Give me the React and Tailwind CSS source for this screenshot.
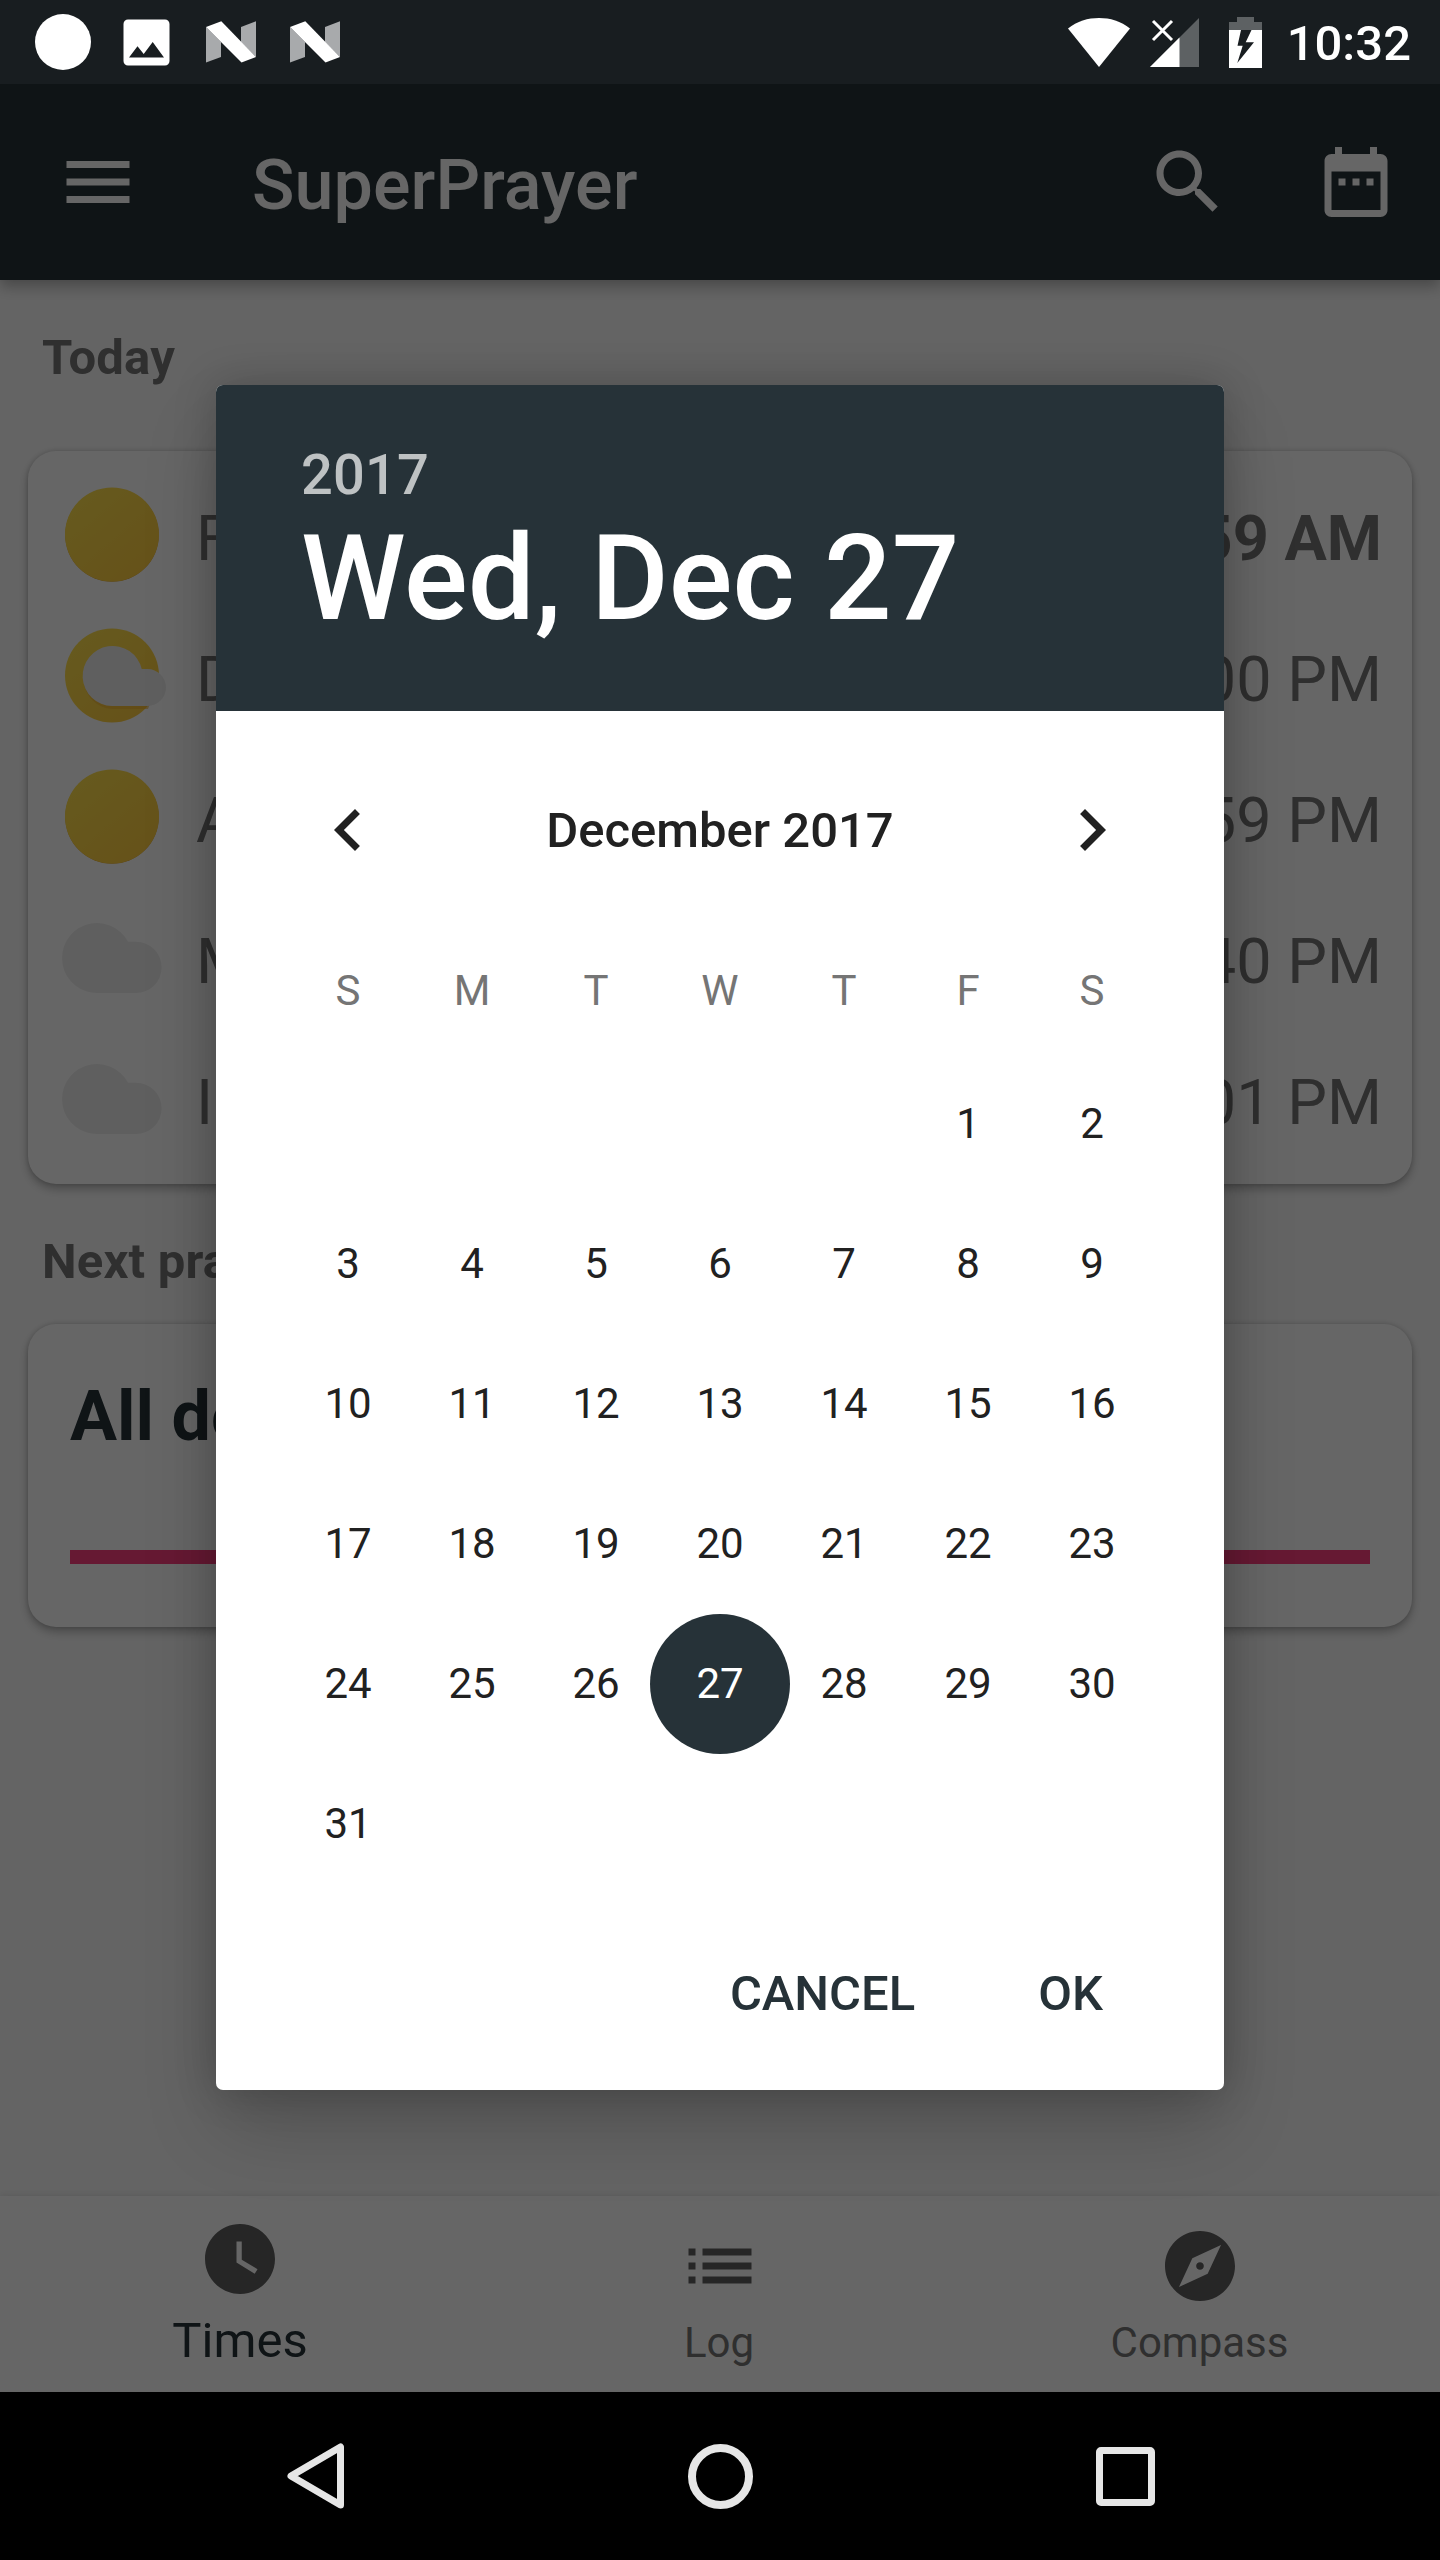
import React from "react";

function Icon({ d, className }) {
  return (
    <svg viewBox="0 0 24 24" className={className} fill="currentColor">
      <path d={d} />
    </svg>
  );
}

const ICONS = {
  menu: "M3 18h18v-2H3v2zm0-5h18v-2H3v2zm0-7v2h18V6H3z",
  search:
    "M15.5 14h-.79l-.28-.27C15.41 12.59 16 11.11 16 9.5 16 5.91 13.09 3 9.5 3S3 5.91 3 9.5 5.91 16 9.5 16c1.61 0 3.09-.59 4.23-1.57l.27.28v.79l5 4.99L20.49 19l-4.99-5zm-6 0C7.01 14 5 11.99 5 9.5S7.01 5 9.5 5 14 7.01 14 9.5 11.99 14 9.5 14z",
  dateRange:
    "M9 11H7v2h2v-2zm4 0h-2v2h2v-2zm4 0h-2v2h2v-2zm2-7h-1V2h-2v2H8V2H6v2H5c-1.11 0-1.99.9-1.99 2L3 20c0 1.1.89 2 2 2h14c1.1 0 2-.9 2-2V6c0-1.1-.9-2-2-2zm0 16H5V9h14v11z",
  clock:
    "M12 2C6.5 2 2 6.5 2 12s4.5 10 10 10 10-4.5 10-10S17.5 2 12 2zm4.2 14.2L11 13V7h1.5v5.2l4.5 2.7-.8 1.3z",
  list: "M3 13h2v-2H3v2zm0 4h2v-2H3v2zm0-8h2V7H3v2zm4 4h14v-2H7v2zm0 4h14v-2H7v2zM7 7v2h14V7H7z",
  compass:
    "M12 10.9c-.61 0-1.1.49-1.1 1.1s.49 1.1 1.1 1.1c.61 0 1.1-.49 1.1-1.1s-.49-1.1-1.1-1.1zM12 2C6.48 2 2 6.48 2 12s4.48 10 10 10 10-4.48 10-10S17.52 2 12 2zm2.19 12.19L6 18l3.81-8.19L18 6l-3.81 8.19z",
  chevronLeft: "M15.41 7.41L14 6l-6 6 6 6 1.41-1.41L10.83 12z",
  chevronRight: "M10 6L8.59 7.41 13.17 12l-4.58 4.59L10 18l6-6z",
};

function NougatIcon() {
  return (
    <svg viewBox="0 0 50 42" className="h-[42px] w-[50px]">
      <path d="M0 6L15 21v15L0 41.500z" fill="#a8aaac" />
      <path d="M35 6L50 .3v35.700L35 21z" fill="#a8aaac" />
      <path d="M0 6L15.300.3 50 36l-14.500 5.500z" fill="#fff" />
    </svg>
  );
}

function StatusBar() {
  return (
    <div className="flex h-[84px] items-center justify-between bg-[#181d20] pr-[29px] pl-[35px] text-white">
      <div className="flex items-center">
        <div className="size-14 rounded-full bg-white" />
        <svg viewBox="0 0 47 47" className="ml-[32px] size-[47px]">
          <path
            fillRule="evenodd"
            fill="#fff"
            d="M5 .5h37a4.500 4.500 0 0 1 4.500 4.500v37a4.500 4.500 0 0 1-4.500 4.500H5A4.500 4.500 0 0 1 .5 42V5A4.500 4.500 0 0 1 5 .5zM6 38.500h35L29.700 23l-9 12-6.200-7.700z"
          />
        </svg>
        <div className="ml-9">
          <NougatIcon />
        </div>
        <div className="ml-[34px]">
          <NougatIcon />
        </div>
      </div>
      <div className="flex items-center">
        <svg viewBox="0 0 62 50" className="h-[50px] w-[62px]">
          <path d="M0 11.500C9 4 20 1 31 1s22 3 31 10.500L31 50z" fill="#fff" />
        </svg>
        <svg viewBox="0 0 49 50" className="ml-5 h-[50px] w-[49px]">
          <path d="M49 1v49H0z" fill="#5d6163" />
          <path d="M29.500 20.500V50H0z" fill="#fff" />
          <path d="M3 4l19 19M22 4L3 23" stroke="#fff" strokeWidth="3" />
        </svg>
        <svg viewBox="0 0 33 51" className="ml-[30px] h-[51px] w-[33px]">
          <path d="M8 0h17v5h8v8H0V5h8z" fill="#5d6163" />
          <path d="M0 13h33v38H0z" fill="#fff" />
          <path d="M12 13h10.500l-5.800 12.300H25L8.300 46l5.400-17.300H8.500z" fill="#181d20" />
        </svg>
        <span className="ml-[25px] pt-1 text-[49px] leading-[56px] font-medium">10:32</span>
      </div>
    </div>
  );
}

function AppBar() {
  return (
    <header className="relative flex h-[196px] shrink-0 items-center bg-[#263238] text-white shadow-[0_6px_14px_rgba(0,0,0,0.3)]">
      <Icon d={ICONS.menu} className="ml-14 size-[84px]" />
      <h1 className="ml-28 flex-1 pt-1.5 text-[70px] leading-[84px] font-medium tracking-[0.1px]">
        SuperPrayer
      </h1>
      <div className="flex w-[168px] justify-center">
        <Icon d={ICONS.search} className="size-[84px]" />
      </div>
      <div className="flex w-[168px] justify-center">
        <Icon d={ICONS.dateRange} className="size-[84px]" />
      </div>
    </header>
  );
}

function Sun() {
  return <circle cx="56" cy="55.500" r="47" fill="url(#sun)" />;
}

function WeatherIcon({ kind }) {
  return (
    <svg viewBox="0 0 112 112" className="mb-px size-28 shrink-0">
      <defs>
        <linearGradient id="sun" x1="0.1" y1="0.1" x2="0.8" y2="0.9">
          <stop offset="0" stopColor="#ffe04c" />
          <stop offset="1" stopColor="#ffce41" />
        </linearGradient>
      </defs>
      {kind === "sun" && (
        <>
          <circle cx="56" cy="56" r="46.800" fill="#e0a83c" />
          <Sun />
        </>
      )}
      {kind === "partly" && (
        <>
          <Sun />
          <path
            d="M56 89a30 30 0 1 1 30-40h6a18 18 0 0 1 10 14L92 89z"
            fill="#f0b232"
            opacity="0.55"
          />
          <path
            d="M56 86a30 30 0 1 1 29.800-37H91.500a18.500 18.500 0 0 1 0 37z"
            fill="#eeeeee"
          />
        </>
      )}
      {kind === "cloud" && (
        <path
          d="M42.500 91a35 35 0 1 1 29.500-51.300h8a25.650 25.650 0 0 1 0 51.300z"
          fill="#eeeeee"
        />
      )}
    </svg>
  );
}

const PRAYERS = [
  { name: "Fajr", time: "5:59 AM", icon: "sun", current: true },
  { name: "Dhuhr", time: "12:00 PM", icon: "partly" },
  { name: "Asr", time: "2:59 PM", icon: "sun" },
  { name: "Maghrib", time: "4:40 PM", icon: "cloud" },
  { name: "Isha", time: "6:01 PM", icon: "cloud" },
];

function Card({ className, children }) {
  return (
    <section
      className={
        "mx-7 rounded-[28px] bg-white shadow-[0_5px_10px_rgba(0,0,0,0.26),0_0_5px_rgba(0,0,0,0.16)] " +
        className
      }
    >
      {children}
    </section>
  );
}

function Home() {
  return (
    <main className="flex-1 bg-[#fafafa] text-[#757575]">
      <h2 className="px-[42px] pt-[49px] pb-16 text-[49px] leading-[58px] font-bold tracking-[0.2px]">
        Today
      </h2>
      <Card className="py-3.5 pr-[30px] pl-7">
        {PRAYERS.map((p) => (
          <div key={p.name} className="flex h-[141px] items-center text-[63px] leading-[74px]">
            <WeatherIcon kind={p.icon} />
            <span className="ml-7 flex-1 pt-[7px]">{p.name}</span>
            <span className={p.current ? "pt-[7px] font-bold" : "pt-[7px]"}>{p.time}</span>
          </div>
        ))}
      </Card>
      <h2 className="px-[42px] pt-[49px] pb-[33px] text-[49px] leading-[58px] font-bold tracking-[0.2px]">
        Next prayer
      </h2>
      <Card className="h-[303px] px-[42px] pt-[50px]">
        <p className="text-[70px] leading-[84px] font-bold text-[#263238]">All done</p>
        <div className="mt-[92px] h-3.5 bg-[#ff4081]" />
      </Card>
    </main>
  );
}

function BottomNav() {
  return (
    <nav className="relative grid h-[196px] shrink-0 grid-cols-3 bg-white text-[#757575] shadow-[0_0_8px_rgba(0,0,0,0.12)]">
      <div className="flex flex-col items-center pt-[21px] text-[#263238]">
        <Icon d={ICONS.clock} className="size-[84px] text-[#606060]" />
        <span className="mt-[11px] text-[49px] leading-[58px]">Times</span>
      </div>
      <div className="flex flex-col items-center pt-7">
        <Icon d={ICONS.list} className="size-[84px] text-[#606060]" />
        <span className="mt-[10px] pr-0.5 text-[42px] leading-[50px]">Log</span>
      </div>
      <div className="flex flex-col items-center pt-7">
        <Icon d={ICONS.compass} className="size-[84px] text-[#606060]" />
        <span className="mt-[10px] pr-px text-[42px] leading-[50px]">Compass</span>
      </div>
    </nav>
  );
}

const WEEKDAYS = ["S", "M", "T", "W", "T", "F", "S"];
const FIRST_WEEKDAY = 5;
const SELECTED = 27;

function DatePicker() {
  const cells = [
    ...Array(FIRST_WEEKDAY).fill(null),
    ...Array.from({ length: 31 }, (_, i) => i + 1),
  ];
  return (
    <div className="h-[1705px] w-[1008px] overflow-hidden rounded-[7px] bg-white text-[#212121]">
      <div className="h-[326px] bg-[#263238] px-[85px] pt-[57px] font-medium text-white">
        <div className="text-[56px] leading-[66px] tracking-[0.2px] text-white/70">2017</div>
        <div className="pt-px text-[119px] leading-[140px]">Wed, Dec 27</div>
      </div>
      <div className="px-[70px] pt-[35px]">
        <div className="flex h-[168px] items-center justify-between px-5">
          <Icon d={ICONS.chevronLeft} className="size-[84px]" />
          <span className="pt-px text-[49px] leading-[58px] font-medium">December 2017</span>
          <Icon d={ICONS.chevronRight} className="size-[84px]" />
        </div>
        <div className="grid h-[140px] grid-cols-7 items-center pt-3.5 text-center text-[42px] leading-[50px] text-[#757575]">
          {WEEKDAYS.map((d, i) => (
            <span key={i}>{d}</span>
          ))}
        </div>
        <div className="grid h-[840px] auto-rows-[140px] grid-cols-7 text-[42px] leading-[50px]">
          {cells.map((day, i) => (
            <div
              key={i}
              className={
                day === SELECTED
                  ? "-mx-2 flex items-center justify-center rounded-full bg-[#263238] text-white"
                  : "flex items-center justify-center"
              }
            >
              {day}
            </div>
          ))}
        </div>
      </div>
      <div className="flex h-[196px] items-center justify-end gap-[123px] pt-1 pr-[121px] text-[49px] leading-[58px] font-medium text-[#263238]">
        <span>CANCEL</span>
        <span>OK</span>
      </div>
    </div>
  );
}

function SystemNav() {
  return (
    <div className="grid h-[168px] grid-cols-[632px_176px_632px] items-center bg-black">
      <svg
        viewBox="0 0 60 66"
        className="ml-[286px] h-[66px] w-[60px]"
        fill="none"
        stroke="#e6e6e6"
        strokeWidth="7"
        strokeLinejoin="round"
      >
        <path d="M54.500 4v58L5 33z" />
      </svg>
      <div className="size-[65px] justify-self-center rounded-full border-[8px] border-[#e6e6e6]" />
      <div className="ml-72 size-[59px] rounded-[5px] border-[7px] border-[#e6e6e6]" />
    </div>
  );
}

export default function App() {
  return (
    <div className="h-[2560px] w-[1440px] overflow-hidden bg-black font-['Roboto',sans-serif]">
      <StatusBar />
      <div className="relative flex h-[2308px] flex-col overflow-hidden">
        <AppBar />
        <Home />
        <BottomNav />
        <div className="absolute inset-0 flex items-center justify-center bg-black/60 pb-px">
          <div className="rounded-[7px] shadow-[0_40px_80px_-6px_rgba(0,0,0,0.2),0_0_44px_rgba(0,0,0,0.2)]">
            <DatePicker />
          </div>
        </div>
      </div>
      <SystemNav />
    </div>
  );
}
